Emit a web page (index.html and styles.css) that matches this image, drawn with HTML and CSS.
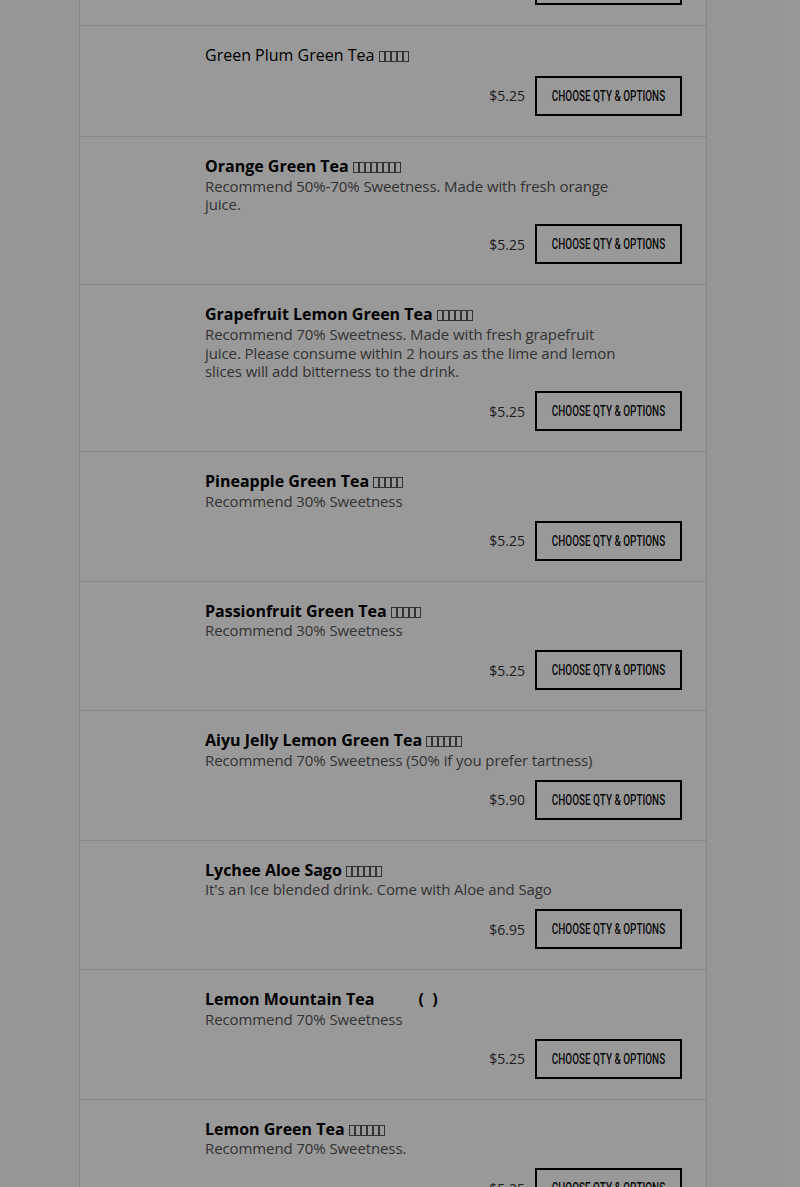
FILE: index.html
```html
<!DOCTYPE html>
<html lang="en">
<head>
  <meta charset="UTF-8" />
  <meta name="viewport" content="width=device-width, initial-scale=1.0"/>
  <title>Menu</title>
  <link rel="stylesheet" href="styles.css">
</head>
<body>
  <div class="page">
    <div class="menu">
      <div class="item item-cut">
        <div class="actions">
          <button class="btn"><span>Choose Qty &amp; Options</span></button>
        </div>
      </div>

      <div class="item">
        <div class="info">
          <h3 class="name light">Green Plum Green Tea <span class="tofu n5"></span></h3>
        </div>
        <div class="actions">
          <span class="price">$5.25</span>
          <button class="btn"><span>Choose Qty &amp; Options</span></button>
        </div>
      </div>

      <div class="item">
        <div class="info">
          <h3 class="name">Orange Green Tea <span class="tofu n8"></span></h3>
          <p class="desc">Recommend 50%-70% Sweetness. Made with fresh orange juice.</p>
        </div>
        <div class="actions">
          <span class="price">$5.25</span>
          <button class="btn"><span>Choose Qty &amp; Options</span></button>
        </div>
      </div>

      <div class="item">
        <div class="info">
          <h3 class="name">Grapefruit Lemon Green Tea <span class="tofu n6"></span></h3>
          <p class="desc">Recommend 70% Sweetness. Made with fresh grapefruit juice. Please consume within 2 hours as the lime and lemon slices will add bitterness to the drink.</p>
        </div>
        <div class="actions">
          <span class="price">$5.25</span>
          <button class="btn"><span>Choose Qty &amp; Options</span></button>
        </div>
      </div>

      <div class="item">
        <div class="info">
          <h3 class="name">Pineapple Green Tea <span class="tofu n5"></span></h3>
          <p class="desc">Recommend 30% Sweetness</p>
        </div>
        <div class="actions">
          <span class="price">$5.25</span>
          <button class="btn"><span>Choose Qty &amp; Options</span></button>
        </div>
      </div>

      <div class="item">
        <div class="info">
          <h3 class="name">Passionfruit Green Tea <span class="tofu n5"></span></h3>
          <p class="desc">Recommend 30% Sweetness</p>
        </div>
        <div class="actions">
          <span class="price">$5.25</span>
          <button class="btn"><span>Choose Qty &amp; Options</span></button>
        </div>
      </div>

      <div class="item">
        <div class="info">
          <h3 class="name">Aiyu Jelly Lemon Green Tea <span class="tofu n6"></span></h3>
          <p class="desc">Recommend 70% Sweetness (50% if you prefer tartness)</p>
        </div>
        <div class="actions">
          <span class="price">$5.90</span>
          <button class="btn"><span>Choose Qty &amp; Options</span></button>
        </div>
      </div>

      <div class="item">
        <div class="info">
          <h3 class="name">Lychee Aloe Sago <span class="tofu n6"></span></h3>
          <p class="desc">It's an Ice blended drink. Come with Aloe and Sago</p>
        </div>
        <div class="actions">
          <span class="price">$6.95</span>
          <button class="btn"><span>Choose Qty &amp; Options</span></button>
        </div>
      </div>

      <div class="item">
        <div class="info">
          <h3 class="name">Lemon Mountain Tea <span class="paren">(&nbsp;&nbsp;)</span></h3>
          <p class="desc">Recommend 70% Sweetness</p>
        </div>
        <div class="actions">
          <span class="price">$5.25</span>
          <button class="btn"><span>Choose Qty &amp; Options</span></button>
        </div>
      </div>

      <div class="item">
        <div class="info">
          <h3 class="name">Lemon Green Tea <span class="tofu n6"></span></h3>
          <p class="desc">Recommend 70% Sweetness.</p>
        </div>
        <div class="actions">
          <span class="price">$5.25</span>
          <button class="btn"><span>Choose Qty &amp; Options</span></button>
        </div>
      </div>
    </div>
  </div>

  <div class="overlay"></div>
</body>
</html>
```

FILE: styles.css
```css
* {
  margin: 0;
  padding: 0;
  box-sizing: border-box;
}

html, body {
  height: 100%;
  overflow: hidden;
}

body {
  background: #fbfbfb;
  font-family: "Open Sans", sans-serif;
  color: #000;
}

.page {
  width: 785px;
  height: 100%;
  overflow: hidden;
  border-right: 15px solid #fefefe;
  box-sizing: content-box;
}

.menu {
  width: 628px;
  margin: -105px auto 0 79px;
  background: #fff;
  border-left: 1px solid #e0e0e0;
  border-right: 1px solid #e0e0e0;
}

.item {
  padding: 20px 24px 20.25px 125px;
  border-bottom: 1px solid #e3e3e3;
}

.item-cut {
  padding-top: 60px;
}

.name {
  font-size: 16px;
  font-weight: 700;
  line-height: 19.5px;
  color: #000;
}

.name.light {
  font-weight: 400;
}

.tofu {
  display: inline-block;
  height: 11px;
  vertical-align: -1px;
  background-image: linear-gradient(90deg, #555 1px, transparent 1px, transparent 5px, #555 5px, #555 6px, transparent 6px);
  background-size: 6px 11px;
  border-top: 1px solid #555;
  border-bottom: 1px solid #555;
}

.tofu.n5 { width: 30px; }
.tofu.n6 { width: 36px; }
.tofu.n8 { width: 48px; }

.paren {
  margin-left: 40px;
}

.desc {
  width: 425px;
  font-size: 15px;
  letter-spacing: -0.1px;
  line-height: 18.75px;
  color: #555;
}

.actions {
  display: flex;
  justify-content: flex-end;
  align-items: center;
  gap: 10px;
  margin-top: 10px;
}

.price {
  font-size: 14px;
  color: #333;
}

.btn {
  display: flex;
  align-items: center;
  justify-content: center;
  width: 147px;
  height: 40px;
  border: 2px solid #000;
  background: #fff;
  color: #111;
  font-family: Roboto, sans-serif;
  font-size: 15.5px;
  font-weight: 500;
  text-transform: uppercase;
  white-space: nowrap;
  cursor: pointer;
}

.btn span {
  display: inline-block;
  transform: scaleX(0.64);
}

.overlay {
  position: fixed;
  inset: 0;
  background: rgba(0, 0, 0, 0.4);
}
```
